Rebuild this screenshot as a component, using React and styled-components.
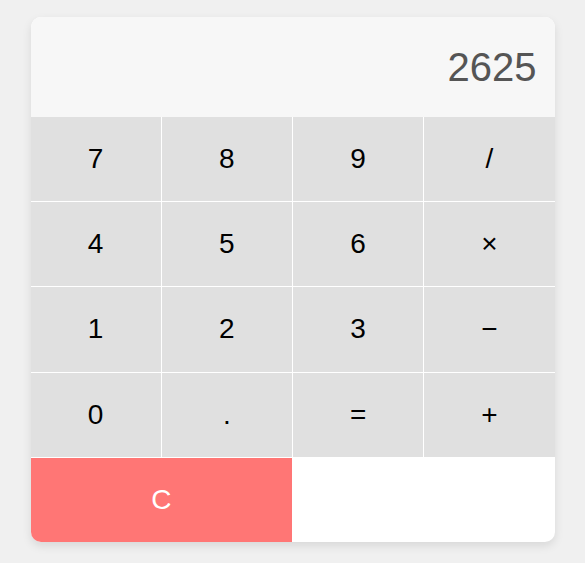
import styled, { createGlobalStyle } from "styled-components";

const GlobalStyle = createGlobalStyle`
  html, body {
    margin: 0;
    padding: 0;
    background: #f0f0f0;
    font-family: "Liberation Sans", Arial, sans-serif;
  }
`;

const Page = styled.div`
  display: flex;
  justify-content: center;
  padding-top: 17px;
  height: 563px;
  box-sizing: border-box;
`;

const Calculator = styled.div`
  width: 524px;
  height: 525px;
  background: #fff;
  border-radius: 10px;
  overflow: hidden;
  box-shadow: 0 4px 10px rgba(0, 0, 0, 0.1);
  display: flex;
  flex-direction: column;
`;

const Display = styled.div`
  height: 100px;
  flex-shrink: 0;
  background: #f7f7f7;
  color: #555;
  font-size: 40px;
  display: flex;
  align-items: center;
  justify-content: flex-end;
  padding: 0 18px;
`;

const Keys = styled.div`
  flex: 1;
  display: grid;
  grid-template-columns: repeat(4, 1fr);
  grid-template-rows: repeat(5, 1fr);
  gap: 1px;
`;

const Key = styled.button`
  border: none;
  margin: 0;
  padding: 0;
  font-family: inherit;
  font-size: 28px;
  color: ${(p) => (p.$clear ? "#fff" : "#000")};
  background: ${(p) => (p.$clear ? "#ff7675" : "#e0e0e0")};
  grid-column: ${(p) => (p.$clear ? "span 2" : "auto")};
  cursor: pointer;
`;

const keys = ["7", "8", "9", "/", "4", "5", "6", "×", "1", "2", "3", "−", "0", ".", "=", "+"];

export default function App() {
  return (
    <>
      <GlobalStyle />
      <Page>
        <Calculator>
          <Display>2625</Display>
          <Keys>
            {keys.map((k) => (
              <Key key={k}>{k}</Key>
            ))}
            <Key $clear>C</Key>
          </Keys>
        </Calculator>
      </Page>
    </>
  );
}
